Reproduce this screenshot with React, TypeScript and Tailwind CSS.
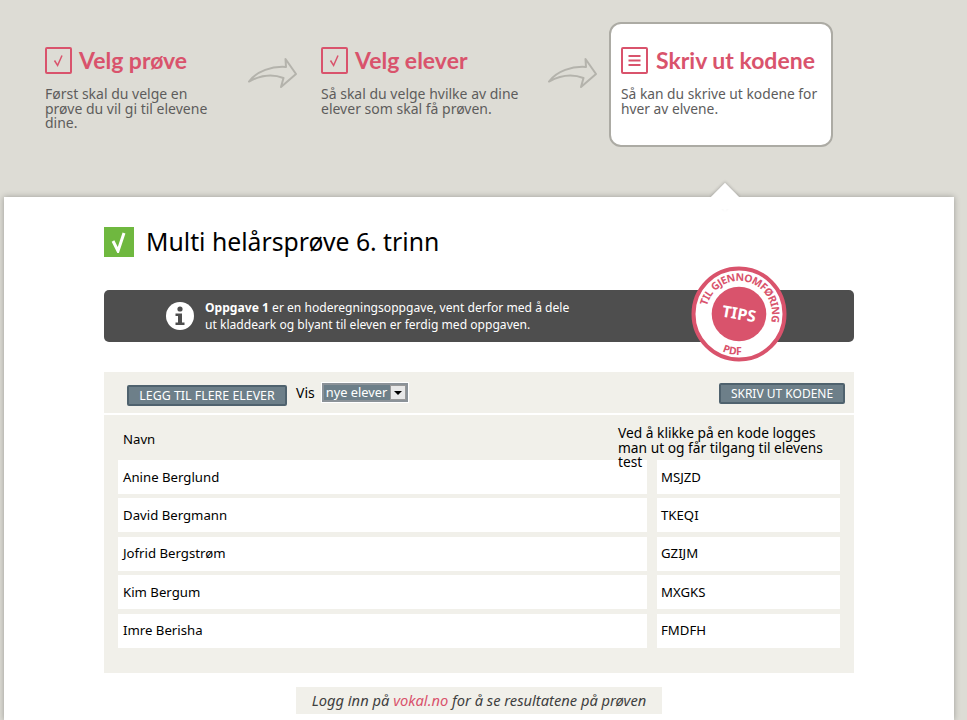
import { Fragment } from "react";

const students = [
  { name: "Anine Berglund", code: "MSJZD" },
  { name: "David Bergmann", code: "TKEQI" },
  { name: "Jofrid Bergstrøm", code: "GZIJM" },
  { name: "Kim Bergum", code: "MXGKS" },
  { name: "Imre Berisha", code: "FMDFH" },
];

function CheckIcon() {
  return (
    <svg width="27" height="27" viewBox="0 0 27 27" fill="none" className="shrink-0">
      <rect x="1" y="1" width="25" height="25" rx="1" stroke="#d9536c" strokeWidth="2" />
      <path d="M9.5 13.5 L12.6 18.5 L17 8.5" stroke="#d9536c" strokeWidth="1.5" />
    </svg>
  );
}

function ListIcon() {
  return (
    <svg width="27" height="27" viewBox="0 0 27 27" fill="none" className="shrink-0">
      <rect x="1" y="1" width="25" height="25" rx="1" stroke="#d9536c" strokeWidth="2" />
      <path d="M7.5 9h12M7.5 13.5h12M7.5 18h12" stroke="#d9536c" strokeWidth="2" />
    </svg>
  );
}

function Arrow() {
  return (
    <svg width="50" height="32" viewBox="0 0 50 32" fill="none" className="shrink-0">
      <path
        d="M1 24.5 C9 14 24 9 38 10 L37.5 2 L48 17 L33 30 L35.5 21 C24 16.5 11 19 1 24.5 Z"
        stroke="#b4b3ac"
        strokeWidth="2"
        strokeLinejoin="round"
      />
    </svg>
  );
}

function StepTitle({ children }: { children: string }) {
  return (
    <span className="font-['Lato',sans-serif] text-[23px] font-bold leading-[27px] whitespace-nowrap text-[#d9536c]">
      {children}
    </span>
  );
}

function TipsBadge() {
  return (
    <svg width="98" height="98" viewBox="0 0 98 98" className="absolute left-[686px] top-[68px]">
      <circle cx="49" cy="49" r="45.5" fill="#fff" stroke="#d9536c" strokeWidth="4" />
      <circle cx="49" cy="49" r="27.3" fill="#d9536c" />
      <defs>
        <path id="tips-top" d="M17 41 A33 33 0 1 1 80.9 57.5" />
        <path id="tips-bottom" d="M25.5 82.6 A41 41 0 0 0 59.6 88.6" />
      </defs>
      <text fontFamily="Noto Sans, sans-serif" fontSize="10.5" fontWeight="700" fill="#d9536c">
        <textPath href="#tips-top" textLength="104">TIL GJENNOMFØRING</textPath>
      </text>
      <text fontFamily="Noto Sans, sans-serif" fontSize="10.5" fontWeight="700" fill="#d9536c" textAnchor="middle">
        <textPath href="#tips-bottom" startOffset="50%">PDF</textPath>
      </text>
      <text x="49" y="54.5" textAnchor="middle" fontFamily="Noto Sans, sans-serif" fontSize="16" fontWeight="700" fill="#fff" transform="rotate(10 49 49)">
        TIPS
      </text>
    </svg>
  );
}

export default function App() {
  return (
    <div className="min-h-[720px] overflow-hidden bg-[#dddcd5] font-['Noto_Sans',sans-serif] text-[13px] text-black">
      <header className="flex h-[197px] items-start pl-[45px] pt-[22px]">
        <div className="mt-[25px] w-[203px]">
          <div className="flex items-center gap-[7px]">
            <CheckIcon />
            <StepTitle>Velg prøve</StepTitle>
          </div>
          <p className="mt-[13px] w-[175px] text-[14px] leading-[14.5px] text-[#5d5c5c]">
            Først skal du velge en prøve du vil gi til elevene dine.
          </p>
        </div>
        <div className="mt-[35px] w-[73px]">
          <Arrow />
        </div>
        <div className="mt-[25px] w-[227px]">
          <div className="flex items-center gap-[7px]">
            <CheckIcon />
            <StepTitle>Velg elever</StepTitle>
          </div>
          <p className="mt-[13px] w-[205px] text-[14px] leading-[14.5px] text-[#5d5c5c]">
            Så skal du velge hvilke av dine elever som skal få prøven.
          </p>
        </div>
        <div className="mt-[35px] w-[61px]">
          <Arrow />
        </div>
        <div className="relative h-[125px] w-[224px] rounded-[12px] border-2 border-[#acaba4] bg-white pl-[10px] pt-[23px]">
          <div className="flex items-center gap-[8px]">
            <ListIcon />
            <StepTitle>Skriv ut kodene</StepTitle>
          </div>
          <p className="mt-[13px] w-[205px] text-[13.8px] leading-[14.5px] text-[#5d5c5c]">
            Så kan du skrive ut kodene for hver av elvene.
          </p>
        </div>
      </header>

      <main className="relative ml-[4px] h-[523px] w-[950px] bg-white px-[100px] pt-[30px] shadow-[0_0_6px_rgba(0,0,0,0.3)]">
        <div className="absolute left-[711px] top-[-10px] h-[20px] w-[20px] rotate-45 bg-white shadow-[-1px_-1px_3px_rgba(0,0,0,0.18)]" />
        <div className="absolute left-[700px] top-0 h-[12px] w-[42px] bg-white" />

        <h1 className="relative flex items-center gap-[12px] text-[24.75px] leading-[30px]">
          <span className="flex h-[30px] w-[30px] items-center justify-center bg-[#6fb83f]">
            <svg width="18" height="22" viewBox="0 0 18 22" fill="none">
              <path d="M3 10 L8 20 L14 2" stroke="#fff" strokeWidth="3" />
            </svg>
          </span>
          Multi helårsprøve 6. trinn
        </h1>

        <div className="mt-[33px] flex h-[52px] items-center rounded-[5px] bg-[#4e4e4e] pl-[62px] text-[12.1px] leading-[17px] text-white">
          <svg width="28" height="28" viewBox="0 0 28 28" className="mr-[11px] shrink-0">
            <circle cx="14" cy="14" r="14" fill="#fff" />
            <circle cx="14" cy="7" r="2.6" fill="#4e4e4e" />
            <path d="M9.5 11.5h6.5v9h2.5v2.5h-9v-2.5h2.5v-6.5h-2.5z" fill="#4e4e4e" />
          </svg>
          <p>
            <b>Oppgave 1</b> er en hoderegningsoppgave, vent derfor med å dele
            <br />
            ut kladdeark og blyant til eleven er ferdig med oppgaven.
          </p>
        </div>
        <TipsBadge />

        <section className="mt-[30px] h-[301px] bg-[#f1f0ea]">
          <div className="flex h-[41px] items-start justify-between pl-[23px] pr-[9px] pt-[11px]">
            <div className="flex items-start">
              <button className="mt-[2px] h-[21px] w-[160px] rounded-[2px] border-2 border-[#4f626e] bg-[#6d7f89] text-[12.4px] leading-[17px] text-white">
                LEGG TIL FLERE ELEVER
              </button>
              <span className="ml-[9px] text-[14px] leading-[20px]">Vis</span>
              <div className="ml-[7px] flex h-[19px] w-[86px] border-2 border-[#8b9298] bg-[#6d7f89] outline outline-1 outline-white">
                <span className="flex-1 pl-[2px] text-[12.8px] leading-[15px] text-white">nye elever</span>
                <span className="flex w-[16px] items-center justify-center border border-[#999] bg-[#e8e8e8]">
                  <span className="h-0 w-0 border-x-[4px] border-t-[4px] border-x-transparent border-t-black" />
                </span>
              </div>
            </div>
            <button className="h-[21px] w-[126px] rounded-[2px] border-2 border-[#4f626e] bg-[#6d7f89] text-[12px] leading-[17px] text-white">
              SKRIV UT KODENE
            </button>
          </div>
          <div className="h-[2px] bg-white" />

          <div className="grid grid-cols-[529px_183px] gap-x-[10px] pl-[14px] text-[13.2px]">
            <div className="flex h-[45px] items-center pl-[5px] pt-[5px]">Navn</div>
            <div className="relative z-10 -ml-[39px] h-[45px] w-[215px] pt-[11px] text-[13.75px] leading-[14.5px]">
              Ved å klikke på en kode logges man ut og får tilgang til elevens test
            </div>
            {students.map((s) => (
              <Fragment key={s.code}>
                <div className="mb-[4.45px] flex h-[34px] items-center bg-white pl-[5px] pt-[1px]">{s.name}</div>
                <div className="mb-[4.45px] flex h-[34px] items-center bg-white pl-[4px] pt-[1px]">{s.code}</div>
              </Fragment>
            ))}
          </div>
        </section>

        <div className="mt-[14px] flex justify-center">
          <p className="h-[27px] bg-[#f1f0ea] px-[15.5px] text-[14.7px] leading-[27px] italic text-[#3f3f3f]">
            Logg inn på <span className="text-[#d9536c]">vokal.no</span> for å se resultatene på prøven
          </p>
        </div>
      </main>
    </div>
  );
}
